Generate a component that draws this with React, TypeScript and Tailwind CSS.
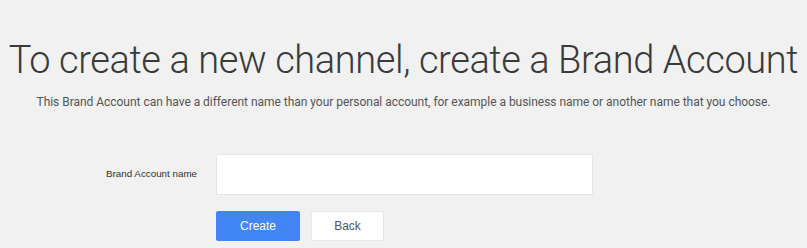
export default function App() {
  return (
    <div className="w-[807px] h-[248px] bg-[#f1f1f1] overflow-hidden font-['Roboto',sans-serif]">
      <div className="pt-[38px] text-center">
        <h1 className="text-[38px] leading-[44px] font-light text-[#3a3a3a] whitespace-nowrap tracking-[-0.4px]">
          To create a new channel, create a Brand Account
        </h1>
        <p className="mt-[13px] text-[12px] leading-[14px] text-[#555] whitespace-nowrap tracking-[-0.03px]">
          This Brand Account can have a different name than your personal account, for example a business name or another name that you choose.
        </p>
      </div>

      <div className="mt-[45px] font-['Liberation_Sans',Arial,sans-serif]">
        <div className="flex items-center">
          <label className="w-[216px] pr-[19px] text-right text-[9.8px] text-[#333]">
            Brand Account name
          </label>
          <input
            type="text"
            className="w-[377px] h-[41px] bg-white border border-[#e6e6e6] rounded-[1px] px-3 text-sm outline-none"
          />
        </div>
        <div className="flex gap-[11px] pl-[216px] mt-[16px]">
          <button className="w-[84px] h-[30px] bg-[#4285f4] text-white text-[12px] rounded-[2px]">
            Create
          </button>
          <button className="w-[73px] h-[30px] bg-white border border-[#e8e8e8] text-[#555] text-[12px] rounded-[2px]">
            Back
          </button>
        </div>
      </div>
    </div>
  );
}
